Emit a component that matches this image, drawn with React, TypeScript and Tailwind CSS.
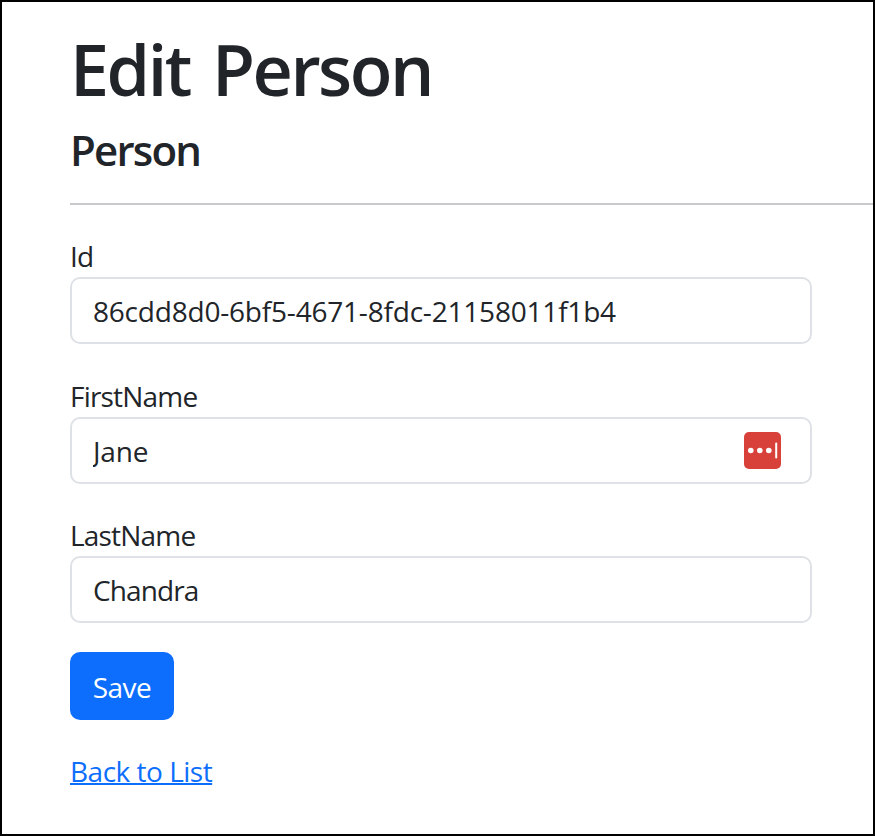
import { useState } from 'react'

interface FieldProps {
  label: string
  value: string
  inputClass: string
  onChange: (value: string) => void
  hasManager?: boolean
}

function PasswordManagerIcon() {
  return (
    <svg
      className="absolute right-[31px] top-[15px]"
      width="37"
      height="37"
      viewBox="0 0 37 37"
      aria-hidden="true"
    >
      <rect width="37" height="37" rx="5" fill="#d8403a" />
      <circle cx="6.8" cy="18.5" r="2.8" fill="#fff" />
      <circle cx="15.8" cy="18.5" r="2.8" fill="#fff" />
      <circle cx="24.8" cy="18.5" r="2.8" fill="#fff" />
      <rect x="31.2" y="10.5" width="2" height="16" rx="1" fill="#fff" />
    </svg>
  )
}

function Field({ label, value, inputClass, onChange, hasManager }: FieldProps) {
  return (
    <div className="mb-[31.5px]">
      <label htmlFor={label} className="block h-[41px] text-[28px] leading-[41px] tracking-[-0.8px]">
        {label}
      </label>
      <div className="relative h-[67px] w-[742px]">
        <input
          id={label}
          value={value}
          onChange={(e) => onChange(e.target.value)}
          className={`block h-full w-full rounded-[10px] border-2 border-[#dee2e6] bg-white px-[21px] pt-px text-[28px] outline-none ${inputClass}`}
        />
        {hasManager && <PasswordManagerIcon />}
      </div>
    </div>
  )
}

export default function App() {
  const [id, setId] = useState('86cdd8d0-6bf5-4671-8fdc-21158011f1b4')
  const [firstName, setFirstName] = useState('Jane')
  const [lastName, setLastName] = useState('Chandra')

  return (
    <div className="h-[836px] w-[875px] overflow-hidden border-2 border-black bg-white pl-[68px] font-['Open_Sans',sans-serif] text-[#212529]">
      <h1 className="mt-[26px] h-[82px] text-[70px] font-semibold leading-[82px] tracking-[-2.5px] [word-spacing:6.5px]">
        Edit Person
      </h1>
      <h2 className="mt-[15px] h-[50px] text-[42px] font-semibold leading-[50px] tracking-[-1.8px]">Person</h2>
      <hr className="mb-[30px] mt-[28px] border-t-2 border-[#c8c9ca] pb-px" />

      <form onSubmit={(e) => e.preventDefault()}>
        <Field label="Id" value={id} inputClass="tracking-[-0.2px]" onChange={setId} />
        <Field label="FirstName" value={firstName} inputClass="tracking-[-0.2px]" onChange={setFirstName} hasManager />
        <Field label="LastName" value={lastName} inputClass="tracking-[-0.9px]" onChange={setLastName} />
        <button
          type="submit"
          className="-mt-[3px] block h-[68px] w-[104px] rounded-[10px] bg-[#0d6efd] pt-0.5 text-[28px] tracking-[-0.5px] text-white"
        >
          Save
        </button>
      </form>

      <a
        href="#"
        className="mt-[31px] inline-block text-[28px] leading-[41px] tracking-[-0.5px] text-[#0d6efd] underline decoration-2"
      >
        Back to List
      </a>
    </div>
  )
}
